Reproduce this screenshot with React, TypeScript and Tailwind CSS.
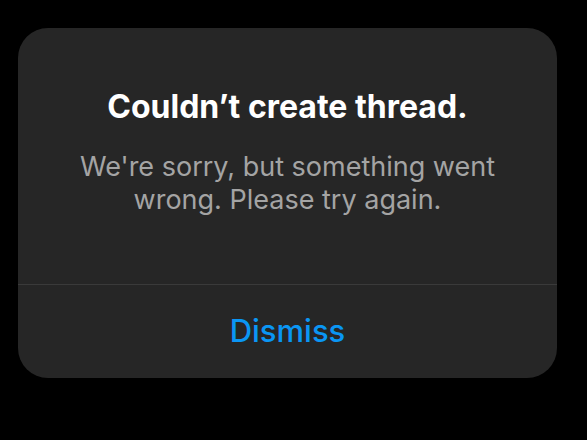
export default function App() {
  return (
    <div className="w-[587px] h-[440px] bg-black overflow-hidden" style={{ fontFamily: 'Inter, "Noto Sans", sans-serif' }}>
      <div className="ml-[18px] mt-[28px] w-[539px] h-[350px] rounded-[30px] bg-[#262626] flex flex-col">
        {/* Message */}
        <div className="h-[256px] flex flex-col items-center pt-[60px] px-6 text-center">
          <h1 className="text-[32px] leading-[38px] font-bold text-white">Couldn’t create thread.</h1>
          <p className="mt-[24px] text-[27px] leading-[33px] text-[#a4a4a4] w-[460px]">
            We're sorry, but something went wrong. Please try again.
          </p>
        </div>

        {/* Action */}
        <div className="border-t border-[#3a3a3a] flex-1 flex items-center justify-center">
          <button className="text-[31px] font-medium text-[#0a96f4] leading-none pb-[2px]">Dismiss</button>
        </div>
      </div>
    </div>
  )
}
